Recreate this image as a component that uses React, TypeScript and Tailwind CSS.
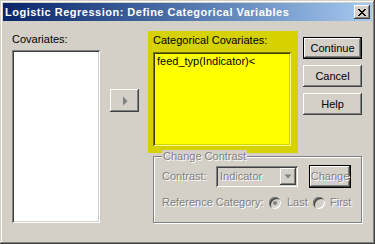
import React from "react";

const raised =
  "bg-[#d4d0c8] shadow-[inset_-1px_-1px_0_#404040,inset_1px_1px_0_#ffffff,inset_-2px_-2px_0_#808080,inset_2px_2px_0_#d4d0c8]";
const sunken =
  "shadow-[inset_1px_1px_0_#808080,inset_-1px_-1px_0_#ffffff,inset_2px_2px_0_#404040,inset_-2px_-2px_0_#d4d0c8]";
const disabledText = "text-[#808080] [text-shadow:1px_1px_0_#ffffff]";

const Radio = ({ checked }: { checked?: boolean }) => (
  <span className="w-[12px] h-[12px] rounded-full bg-[#d4d0c8] flex items-center justify-center shadow-[inset_1px_1px_0_#808080,inset_-1px_-1px_0_#ffffff,inset_2px_2px_0_#404040,inset_-2px_-2px_0_#d4d0c8]">
    {checked && <span className="w-[4px] h-[4px] rounded-full bg-[#808080]" />}
  </span>
);

const App = () => {
  return (
    <div className="w-[375px] h-[244px] p-[3px] flex flex-col bg-[#d4d0c8] shadow-[inset_-1px_-1px_0_#404040,inset_1px_1px_0_#d4d0c8,inset_-2px_-2px_0_#808080,inset_2px_2px_0_#ffffff] font-['Liberation_Sans',Arial,sans-serif] text-[11px] leading-[13px] text-black">
      {/* Title bar */}
      <div className="h-[18px] flex items-center justify-between pl-[2px] pr-[2px] bg-gradient-to-r from-[#0a246a] to-[#a6caf0]">
        <span className="text-white font-bold text-[11px] tracking-[0.5px]">
          Logistic Regression: Define Categorical Variables
        </span>
        <div className={`w-[16px] h-[14px] flex items-center justify-center ${raised}`}>
          <svg width="8" height="7" viewBox="0 0 8 7" shapeRendering="crispEdges">
            <path d="M0 0h2v1h-2zM6 0h2v1h-2zM1 1h2v1h-2zM5 1h2v1h-2zM2 2h4v1h-4zM3 3h2v1h-2zM2 4h4v1h-4zM1 5h2v1h-2zM5 5h2v1h-2zM0 6h2v1h-2zM6 6h2v1h-2z" fill="#000" />
          </svg>
        </div>
      </div>

      {/* Body */}
      <div className="flex flex-1">
        {/* Covariates */}
        <div className="ml-[9px] pt-[12px] flex flex-col">
          <span className="mb-[4px]">Covariates:</span>
          <div className={`w-[88px] h-[173px] bg-white ${sunken}`} />
        </div>

        {/* Move button */}
        <div className="ml-[10px] mt-[68px]">
          <div className={`w-[29px] h-[23px] flex items-center justify-center ${raised}`}>
            <svg width="6" height="10" viewBox="0 0 6 10">
              <path d="M1 0.5 L5.5 5 L1 9.5 Z" fill="#808080" />
            </svg>
          </div>
        </div>

        {/* Right part */}
        <div className="ml-[9px] flex flex-col">
          <div className="flex mt-[10px]">
            {/* Highlighted categorical covariates */}
            <div className="w-[150px] h-[122px] bg-[#d6d100] pl-[5px] pt-[3px] flex flex-col">
              <span className="mb-[5px]">Categorical Covariates:</span>
              <div className="w-[138px] h-[94px] bg-[#ffff00] px-[4px] pt-[3px] shadow-[inset_1px_1px_0_#7a7700,inset_-1px_-1px_0_#ffff80,inset_2px_2px_0_#3d3c00,inset_-2px_-2px_0_#d6d100]">
                feed_typ(Indicator)&lt;
              </div>
            </div>

            {/* Buttons */}
            <div className="ml-[5px] mt-[6px] flex flex-col gap-[6px]">
              <div className="w-[59px] h-[22px] bg-black p-[1px]">
                <div className={`w-full h-full flex items-center justify-center ${raised}`}>Continue</div>
              </div>
              <div className={`w-[59px] h-[22px] flex items-center justify-center ${raised}`}>Cancel</div>
              <div className={`w-[59px] h-[22px] flex items-center justify-center ${raised}`}>Help</div>
            </div>
          </div>

          {/* Change Contrast group */}
          <div className="relative ml-[5px] mt-[3px] w-[209px] h-[67px] border border-[#808080] shadow-[1px_1px_0_#ffffff,inset_1px_1px_0_#ffffff] pl-[8px] pt-[8px]">
            <span className={`absolute left-[8px] top-[-7px] px-[1px] bg-[#d4d0c8] ${disabledText}`}>
              Change Contrast
            </span>
            <div className="flex items-center h-[23px]">
              <span className={`w-[54px] ${disabledText}`}>Contrast:</span>
              <div className={`w-[82px] h-[21px] bg-[#d4d0c8] flex items-center justify-between pl-[4px] pr-[2px] ${sunken}`}>
                <span className={disabledText}>Indicator</span>
                <div className={`w-[16px] h-[17px] flex items-center justify-center ${raised}`}>
                  <svg width="8" height="5" viewBox="0 0 8 5">
                    <path d="M0.5 0.5 L7.5 0.5 L4 4.5 Z" fill="#808080" />
                  </svg>
                </div>
              </div>
              <div className="ml-[11px] w-[42px] h-[23px] bg-black p-[1px]">
                <div className={`w-full h-full flex items-center justify-center ${raised} ${disabledText}`}>Change</div>
              </div>
            </div>
            <div className="flex items-center mt-[8px] h-[13px]">
              <span className={`w-[107px] ${disabledText}`}>Reference Category:</span>
              <Radio checked />
              <span className={`ml-[6px] w-[26px] ${disabledText}`}>Last</span>
              <Radio />
              <span className={`ml-[5px] ${disabledText}`}>First</span>
            </div>
          </div>
        </div>
      </div>
    </div>
  );
};

export default App;
